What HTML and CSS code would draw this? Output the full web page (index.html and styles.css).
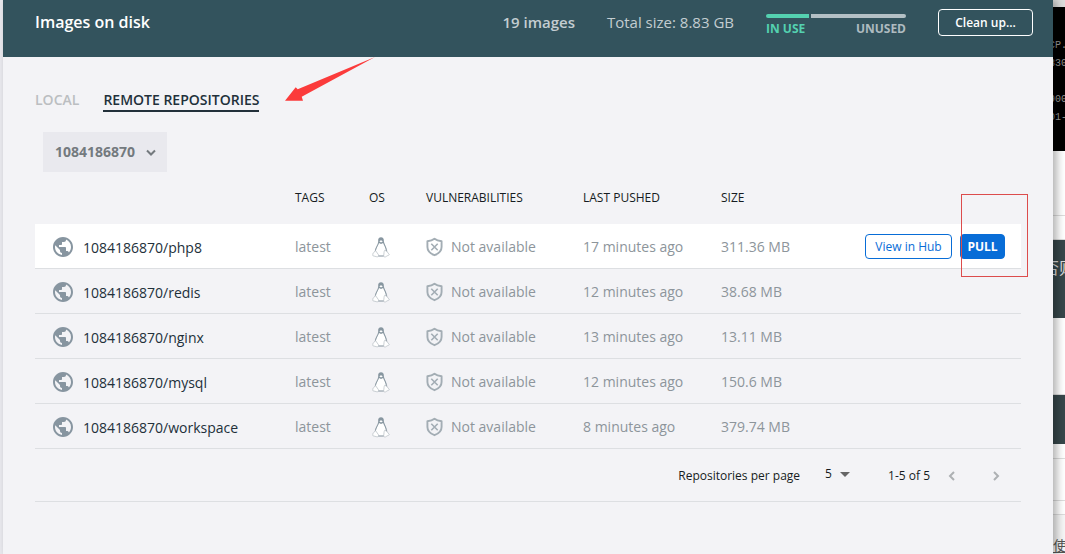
FILE: index.html
```html
<!DOCTYPE html>
<html lang="en">
<head>
<meta charset="utf-8">
<title>Images on disk</title>
<link rel="stylesheet" href="styles.css">
</head>
<body>
<svg class="defs" aria-hidden="true">
  <symbol id="globe" viewBox="2 2 20 20"><path fill="currentColor" d="M12 2C6.48 2 2 6.48 2 12s4.48 10 10 10 10-4.48 10-10S17.52 2 12 2zm-1 17.93c-3.95-.49-7-3.85-7-7.93 0-.62.08-1.21.21-1.79L9 15v1c0 1.1.9 2 2 2v1.93zm6.900-2.540c-.26-.81-1-1.390-1.900-1.390h-1v-3c0-.55-.45-1-1-1H8v-2h2c.55 0 1-.45 1-1V7h2c1.100 0 2-.9 2-2v-.41c2.930 1.190 5 4.060 5 7.410 0 2.080-.8 3.970-2.100 5.390z"/></symbol>
  <symbol id="linux" viewBox="0 0 18 22">
    <path fill="#fff" stroke="#a3adb4" stroke-width=".7" d="M6.600 6C6.500 9 3 11.500 3 16.500l3 3.500h6l3-3.500C15 11.500 11.500 9 11.500 6z"/>
    <path fill="#8796a0" d="M6.200 5.500C5.900 2.500 7 1.200 9 1.200s3 1.300 2.900 4.300c.1 2.500 3 5.500 2.900 10l-.9-.7C13.600 11.500 12.100 9.500 11.200 7L9 8 7 7C6.300 9.500 4.200 11.500 3.900 15l-.9.600C3.100 11.300 6.300 9 6.200 5.500z"/>
    <path fill="#fff" d="M7.300 5.200 9 4.300l1.800.9L9 6.600z"/>
    <path fill="#fff" stroke="#b4bcc2" stroke-width=".7" d="m3.500 14.500 3 4.300c.5 1-.3 2.200-1.600 2L1 19.800c-.7-.3-.1-1.300-.1-2 0-1.600 1.500-.8 2.600-3.300zM14 14.800c.5 1.200 1.800.7 2.100 2.300l1.200 1.300c.3.800-2.300 1.300-3 2-1.200 1.100-2.700.5-2.600-.8.300-1.700.2-4.300 1-5.300z"/>
    <path stroke="#8796a0" stroke-width=".7" d="M6.500 20h5"/>
  </symbol>
  <symbol id="shield" viewBox="0 0 18 20"><path fill="none" stroke="currentColor" stroke-width="2" stroke-linejoin="round" d="M9 1.200C7 2.800 4.500 3.600 1.500 3.900V10c0 4.200 3 7 7.500 8.700 4.500-1.700 7.500-4.500 7.500-8.700V3.900C13.500 3.600 11 2.800 9 1.200z"/><path stroke="currentColor" stroke-width="1.700" d="m5.600 6.600 6.800 6.800m0-6.800-6.800 6.800"/></symbol>
</svg>
<div class="app">
  <main class="window">
    <header class="topbar">
      <h1 class="title">Images on disk</h1>
      <strong class="count">19 images</strong>
      <span class="total">Total size: 8.83 GB</span>
      <div class="usage">
        <div class="bar"><span class="used"></span><span class="free"></span></div>
        <div class="legend"><span class="in-use">IN USE</span><span>UNUSED</span></div>
      </div>
      <button class="cleanup" type="button">Clean up...</button>
    </header>
    <section class="content">
      <nav class="tabs">
        <a class="tab" href="#local">LOCAL</a>
        <a class="tab active" href="#remote" aria-current="page">REMOTE REPOSITORIES</a>
      </nav>
      <div class="account">
        <select class="account-select" aria-label="Account"><option>1084186870</option></select>
        <svg class="chevron" viewBox="0 0 10 6" aria-hidden="true"><path d="m1 1 4 4 4-4"/></svg>
      </div>
      <table class="repos">
        <colgroup><col class="c-name"><col class="c-tags"><col class="c-os"><col class="c-vuln"><col class="c-pushed"><col class="c-size"><col></colgroup>
        <thead><tr><th aria-label="Repository"></th><th>TAGS</th><th>OS</th><th>VULNERABILITIES</th><th>LAST PUSHED</th><th>SIZE</th><th aria-label="Actions"></th></tr></thead>
        <tbody>
          <tr class="hovered">
            <td><div class="name"><svg class="globe"><use href="#globe"/></svg><span class="repo">1084186870/php8</span></div></td>
            <td>latest</td><td><svg class="linux"><use href="#linux"/></svg></td>
            <td><div class="vuln"><svg class="shield"><use href="#shield"/></svg>Not available</div></td>
            <td>17 minutes ago</td><td>311.36 MB</td>
            <td><div class="actions"><button class="hub" type="button">View in Hub</button><button class="pull" type="button">PULL</button><span class="highlight"></span></div></td>
          </tr>
          <tr>
            <td><div class="name"><svg class="globe"><use href="#globe"/></svg><span class="repo">1084186870/redis</span></div></td>
            <td>latest</td><td><svg class="linux"><use href="#linux"/></svg></td>
            <td><div class="vuln"><svg class="shield"><use href="#shield"/></svg>Not available</div></td>
            <td>12 minutes ago</td><td>38.68 MB</td><td></td>
          </tr>
          <tr>
            <td><div class="name"><svg class="globe"><use href="#globe"/></svg><span class="repo">1084186870/nginx</span></div></td>
            <td>latest</td><td><svg class="linux"><use href="#linux"/></svg></td>
            <td><div class="vuln"><svg class="shield"><use href="#shield"/></svg>Not available</div></td>
            <td>13 minutes ago</td><td>13.11 MB</td><td></td>
          </tr>
          <tr>
            <td><div class="name"><svg class="globe"><use href="#globe"/></svg><span class="repo">1084186870/mysql</span></div></td>
            <td>latest</td><td><svg class="linux"><use href="#linux"/></svg></td>
            <td><div class="vuln"><svg class="shield"><use href="#shield"/></svg>Not available</div></td>
            <td>12 minutes ago</td><td>150.6 MB</td><td></td>
          </tr>
          <tr>
            <td><div class="name"><svg class="globe"><use href="#globe"/></svg><span class="repo">1084186870/workspace</span></div></td>
            <td>latest</td><td><svg class="linux"><use href="#linux"/></svg></td>
            <td><div class="vuln"><svg class="shield"><use href="#shield"/></svg>Not available</div></td>
            <td>8 minutes ago</td><td>379.74 MB</td><td></td>
          </tr>
        </tbody>
      </table>
      <footer class="pager">
        <label for="per-page">Repositories per page</label>
        <div class="page-size">
          <select id="per-page"><option>5</option></select>
          <svg class="caret" viewBox="0 0 10 5" aria-hidden="true"><path d="M0 0h10L5 5z"/></svg>
        </div>
        <span class="range">1-5 of 5</span>
        <button class="step" type="button" aria-label="Previous page" disabled><svg viewBox="0 0 8 12"><path d="M6 2 2 6l4 4"/></svg></button>
        <button class="step" type="button" aria-label="Next page" disabled><svg viewBox="0 0 8 12"><path d="m2 2 4 4-4 4"/></svg></button>
      </footer>
    </section>
    <svg class="arrow" viewBox="0 0 90 46" aria-hidden="true"><path fill="#fb3b3b" d="M90 0 12.700 32.300 10.700 30.300 0 43.700h18l-1.300-4z"/></svg>
  </main>
  <aside class="behind" aria-hidden="true">
    <div class="sheet gap"></div>
    <div class="console"><span>CP.</span><span>330</span><span></span><span>900</span><span>01-</span></div>
    <div class="sheet tall"></div>
    <div class="sheet short"></div>
    <div class="slab large">否则</div>
    <div class="sheet mid"></div>
    <div class="slab small"></div>
    <div class="sheet line-a"></div>
    <div class="sheet line-b"></div>
    <div class="sheet line-c"></div>
    <div class="last">使用</div>
  </aside>
</div>
</body>
</html>
```
FILE: styles.css
```css
* { box-sizing: border-box; }
body { margin: 0; background: #e9e9ee; color: #22303a; font: 14px/20px "Open Sans", "Noto Sans", sans-serif; }
button, select { font: inherit; margin: 0; }
.defs { position: absolute; width: 0; height: 0; }
.app { display: flex; min-height: 100vh; padding-left: 3px; overflow: hidden; }
.window { position: relative; z-index: 1; flex: 1; min-width: 0; background: #f3f3f6; box-shadow: 4px 0 8px rgba(0, 0, 0, .3); }

.topbar { display: flex; align-items: flex-start; height: 57px; padding: 9px 20px 0 32px; background: #33535d; color: #c3cdd1; }
.title { flex: 1; margin: 0; padding-top: 3px; font-size: 16px; line-height: 20px; font-weight: 600; color: #fff; }
.count, .total { padding-top: 3px; font-size: 15px; }
.count { font-weight: 600; margin-right: 32px; }
.total { margin-right: 32px; }
.usage { width: 140px; margin-right: 32px; padding-top: 5px; }
.bar { display: flex; gap: 2px; height: 4px; }
.used { flex: 43 0 0; border-radius: 2px 0 0 2px; background: #54d1b0; }
.free { flex: 95 0 0; border-radius: 0 2px 2px 0; background: #b4c0c5; }
.legend { display: flex; justify-content: space-between; padding-top: 3px; font-size: 12px; line-height: 16px; font-weight: 700; color: #aebbc0; }
.in-use { color: #54d1b0; }
.cleanup { width: 95px; height: 27px; padding: 0; border: 1px solid #fff; border-radius: 4px; background: transparent; color: #fff; font-size: 12px; font-weight: 600; }

.content { padding: 32px; }
.tabs { display: flex; gap: 24px; }
.tab { padding-top: 1px; color: #bbbec1; font-weight: 600; text-decoration: none; }
.active { color: #22303a; border-bottom: 2px solid #22303a; }
.account { position: relative; width: 124px; margin: 20px 8px 0; }
.account-select { display: block; width: 100%; height: 40px; padding: 0 12px; border: 0; appearance: none; background: #e9e9ee; color: #747a7e; font-weight: 700; }
.chevron { position: absolute; right: 11px; top: 17px; width: 10px; height: 7px; fill: none; stroke: #747a7e; stroke-width: 2; pointer-events: none; }

.repos { width: 100%; table-layout: fixed; border-collapse: separate; border-spacing: 0; }
.c-name { width: 260px; }
.c-tags { width: 74px; }
.c-os { width: 57px; }
.c-vuln { width: 157px; }
.c-pushed { width: 138px; }
.c-size { width: 100px; }
th { height: 52px; padding: 0; text-align: left; font-size: 12px; font-weight: 400; color: #161c22; }
td { height: 45px; padding: 1px 0 0; border-bottom: 1px solid #dddfe2; color: #8d959b; white-space: nowrap; }
.hovered { background: #fff; }
.name, .vuln, .actions { display: flex; align-items: center; }
.name { gap: 10px; padding-left: 18px; }
.repo { padding-top: 3px; color: #22303a; font-weight: 500; }
.globe { width: 20px; height: 20px; color: #8795a0; }
.linux { display: block; width: 18px; height: 22px; margin-left: 3px; }
.vuln { gap: 8px; }
.shield { width: 17px; height: 20px; color: #a3adb4; }
.actions { position: relative; justify-content: flex-end; gap: 8px; padding-right: 16px; }
.hub, .pull { height: 25px; padding: 0; border: 1px solid #086dd7; border-radius: 4px; font-size: 12px; }
.hub { width: 87px; background: #fff; color: #086dd7; font-weight: 500; }
.pull { width: 45px; background: #086dd7; color: #fff; font-weight: 700; }
.highlight { position: absolute; right: -7px; top: -40px; width: 67px; height: 83px; border: 1px solid #dc4c4c; pointer-events: none; }

.pager { display: flex; align-items: center; justify-content: flex-end; height: 53px; padding: 2px 21px 0 0; border-bottom: 1px solid #dddfe2; font-size: 12px; color: #161c22; }
.page-size { position: relative; width: 25px; margin: 0 38px 0 25px; }
.page-size select { display: block; width: 100%; height: 24px; padding: 0 0 4px; border: 0; background: transparent; appearance: none; color: inherit; }
.caret { position: absolute; right: 0; top: 8px; width: 10px; height: 5px; fill: #666; pointer-events: none; }
.range { margin-right: 18px; }
.step { display: flex; width: 8px; padding: 0; border: 0; background: none; }
.step + .step { margin-left: 36px; }
.step svg { width: 8px; height: 12px; fill: none; stroke: #adb0b3; stroke-width: 2; }
.arrow { position: absolute; left: 282px; top: 57px; width: 90px; height: 46px; pointer-events: none; }

.behind { width: 12px; display: flex; flex-direction: column; background: #fff; white-space: nowrap; }
.console { display: flex; flex-direction: column; height: 144px; padding-top: 30px; background: #000; color: #999; font: 10px/18px "Liberation Mono", monospace; }
.console span { height: 18px; margin-left: -4px; }
.gap { height: 7px; background: #ddd; }
.sheet { border-bottom: 1px solid #ddd; }
.tall { height: 65px; }
.short { height: 24px; }
.slab { background: #37474b; color: #ddd; font: 16px/54px "Noto Sans CJK SC", sans-serif; text-indent: -10px; }
.large { height: 78px; }
.mid { height: 77px; }
.small { height: 49px; }
.line-a { height: 15px; }
.line-b { height: 42px; }
.line-c { height: 14px; }
.last { flex: 1; padding-top: 20px; background: #f6f6f6; color: #555; font: 14px/20px "Noto Sans CJK SC", sans-serif; text-decoration: underline; }
```
